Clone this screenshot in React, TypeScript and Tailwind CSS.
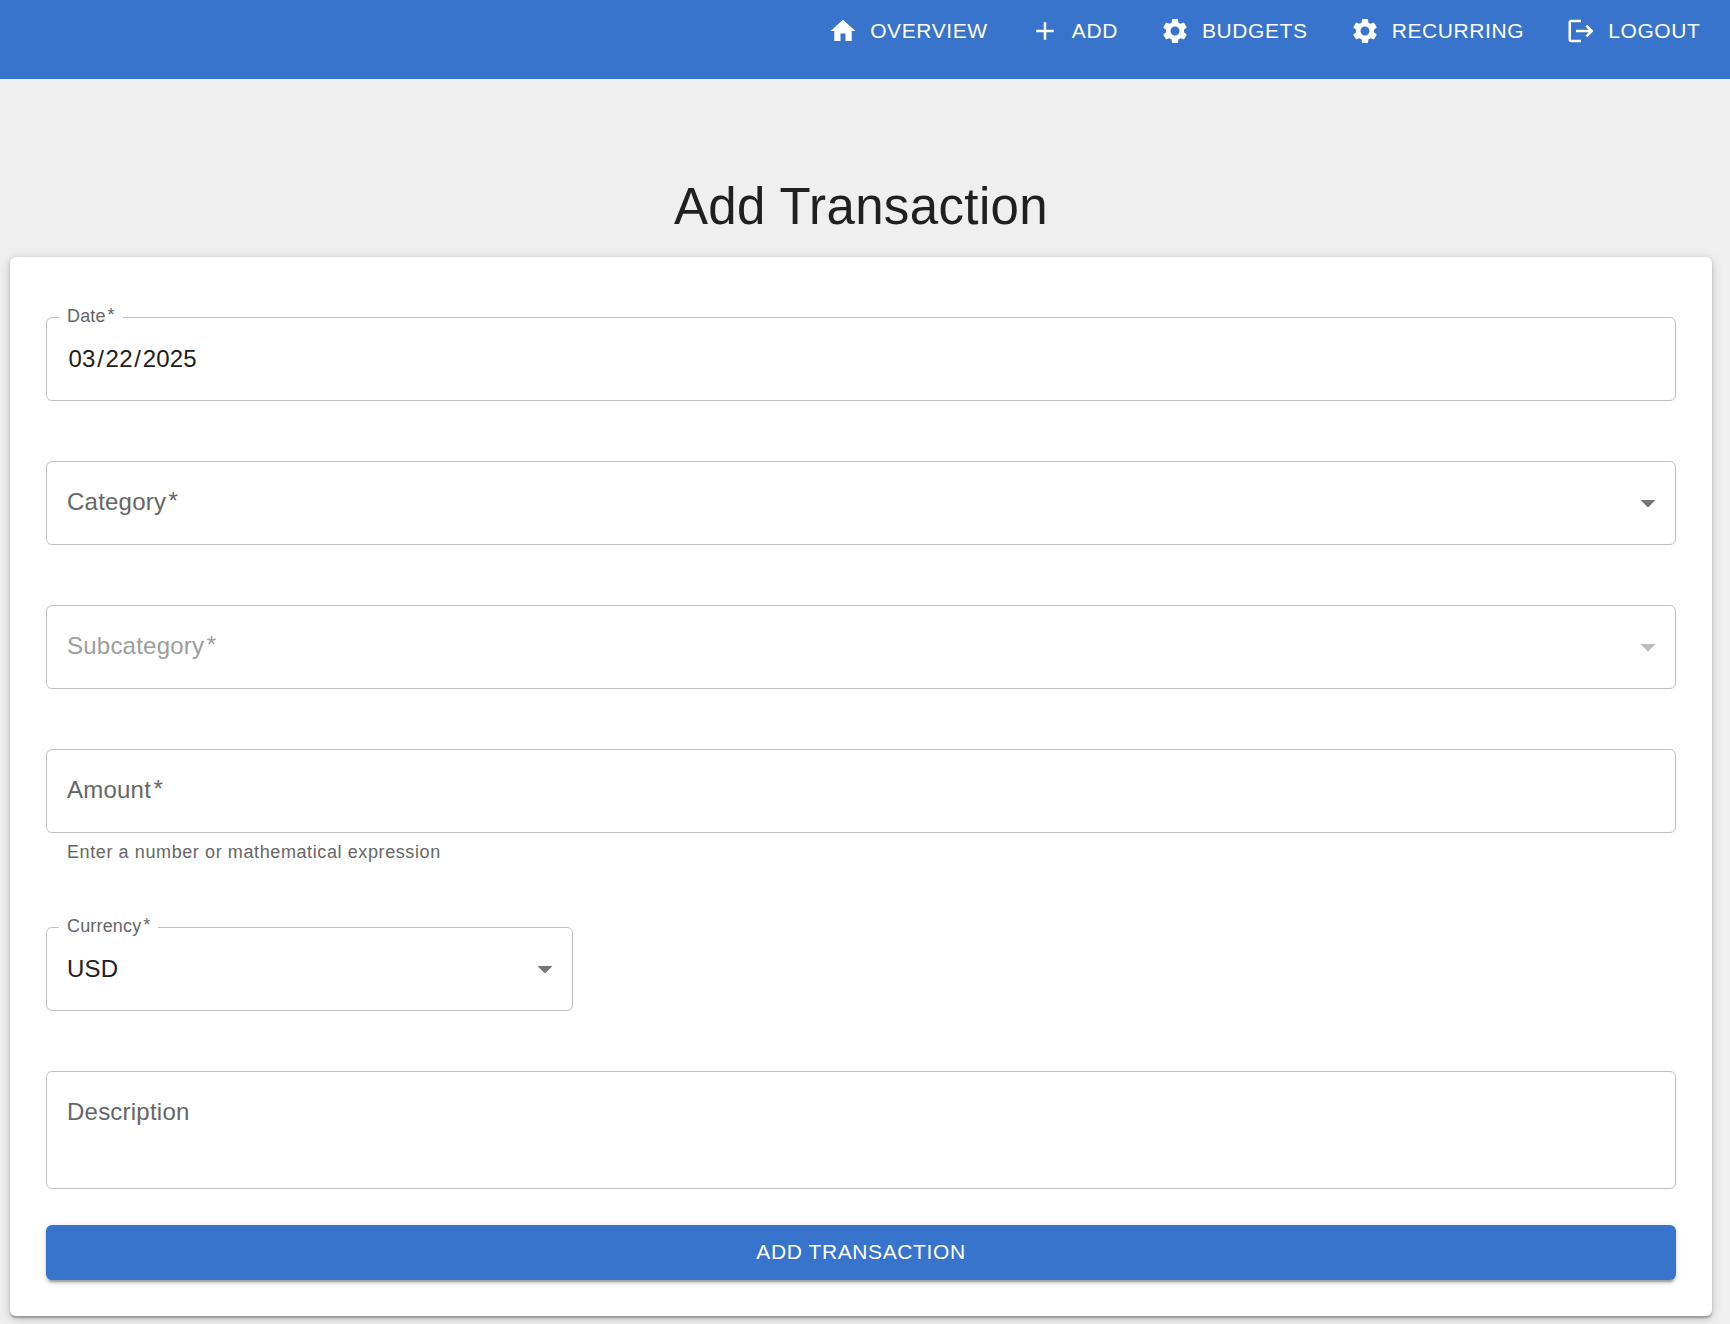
import type { ReactNode } from "react";
import { MdAdd, MdArrowDropDown, MdHome, MdLogout, MdSettings } from "react-icons/md";

const navItems = [
  { icon: MdHome, label: "Overview" },
  { icon: MdAdd, label: "Add" },
  { icon: MdSettings, label: "Budgets" },
  { icon: MdSettings, label: "Recurring" },
  { icon: MdLogout, label: "Logout" },
];

function Navbar() {
  return (
    <header className="h-[79px] bg-[#3874cb] text-white">
      <nav className="flex h-[62px] items-center justify-end gap-[42px] pr-[29.5px]">
        {navItems.map(({ icon: Icon, label }) => (
          <button
            key={label}
            type="button"
            className="flex items-center gap-3 text-[21px] leading-[35px] tracking-[0.6px] uppercase"
          >
            <Icon size={30} />
            <span className="pb-[2px]">{label}</span>
          </button>
        ))}
      </nav>
    </header>
  );
}

function Star() {
  return <span className="relative -top-px ml-[0.1em]">*</span>;
}

type FieldProps = {
  label?: ReactNode;
  floating?: boolean;
  muted?: boolean;
  arrow?: boolean;
  className: string;
  children?: ReactNode;
};

/* Outlined input; a floating label sits over the top border. */
function Field({ label, floating, muted, arrow, className, children }: FieldProps) {
  return (
    <div
      className={`relative flex justify-between rounded-[6px] border border-[#c0c0c0] pt-[23px] pr-[9px] pl-[20px] text-[24px] leading-[36px] tracking-[0.225px] text-[#202020] ${className}`}
    >
      {floating ? (
        <>
          <label className="absolute -top-[15px] left-[12px] bg-white pr-[8px] pl-[8px] text-[18px] leading-[26px] tracking-[0.17px] text-[#666666]">
            {label}
          </label>
          <div>{children}</div>
        </>
      ) : (
        <label className={muted ? "-mt-px text-[#9e9e9e]" : "-mt-px text-[#666666]"}>{label}</label>
      )}
      {arrow && <MdArrowDropDown size={36} className={muted ? "text-[#bdbdbd]" : "text-[#757575]"} />}
    </div>
  );
}

export default function App() {
  return (
    <div
      className="h-[1324px] overflow-hidden bg-[#efefef]"
      style={{ fontFamily: '"Liberation Sans", Arial, sans-serif' }}
    >
      <Navbar />
      <main className="flex flex-col pt-[96px] pr-[18px] pl-[10px]">
        <h1 className="h-[82px] text-center text-[51px] leading-[63px] tracking-[0.375px] text-[#202020]">
          Add Transaction
        </h1>
        <form className="flex h-[1059px] flex-col rounded-[6px] bg-white px-9 pt-[60px] shadow-[0_3px_1.5px_-1.5px_rgba(0,0,0,0.12),0_1.5px_1.5px_0_rgba(0,0,0,0.1),0_1.5px_4.5px_0_rgba(0,0,0,0.12),0_3px_12px_0_rgba(0,0,0,0.16)]">
          <Field floating label={<>Date<Star /></>} className="h-[84px]">
            <span className="px-[1.5px]">03</span>/<span className="px-[1.5px]">22</span>/
            <span className="px-[1.5px]">2025</span>
          </Field>
          <Field arrow label={<>Category<Star /></>} className="mt-[60px] h-[84px]" />
          <Field arrow muted label={<>Subcategory<Star /></>} className="mt-[60px] h-[84px]" />
          <Field label={<>Amount<Star /></>} className="mt-[60px] h-[84px]" />
          <p className="mt-[4px] h-[30px] pl-[21px] text-[18px] leading-[30px] tracking-[0.6px] text-[#666666]">
            Enter a number or mathematical expression
          </p>
          <Field floating arrow label={<>Currency<Star /></>} className="mt-[60px] h-[84px] w-[527px]">
            USD
          </Field>
          <Field label="Description" className="mt-[60px] h-[118px]" />
          <button
            type="button"
            className="mt-9 h-[55px] rounded-[6px] bg-[#3874cb] pb-[2px] text-[21px] tracking-[0.6px] text-white uppercase shadow-[0_4.5px_1.5px_-3px_rgba(0,0,0,0.2),0_3px_3px_0_rgba(0,0,0,0.14),0_1.5px_7.5px_0_rgba(0,0,0,0.12)]"
          >
            Add Transaction
          </button>
        </form>
      </main>
    </div>
  );
}
